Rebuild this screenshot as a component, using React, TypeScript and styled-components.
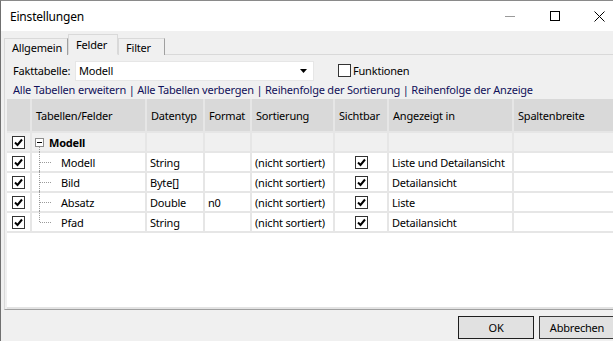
import React from 'react'
import styled, { createGlobalStyle } from 'styled-components'

const GlobalStyle = createGlobalStyle`
  html, body {
    margin: 0;
    padding: 0;
    overflow: hidden;
    background: #ffffff;
  }
  body {
    font-family: 'Noto Sans', 'Open Sans', sans-serif;
    font-size: 11px;
    letter-spacing: -0.2px;
    color: #000;
  }
`

type Field = {
  name: string
  type: string
  format: string
  shownIn: string
}

const fields: Field[] = [
  { name: 'Modell', type: 'String', format: '', shownIn: 'Liste und Detailansicht' },
  { name: 'Bild', type: 'Byte[]', format: '', shownIn: 'Detailansicht' },
  { name: 'Absatz', type: 'Double', format: 'n0', shownIn: 'Liste' },
  { name: 'Pfad', type: 'String', format: '', shownIn: 'Detailansicht' },
]

const columns = '23px 113px 56px 45px 81px 52px 123px 1fr'

const CheckBox: React.FC<{ checked?: boolean }> = ({ checked }) => (
  <StyledCheck>
    {checked && (
      <svg width="9" height="9" viewBox="0 0 9 9">
        <path d="M1 4.5 L3.5 7 L8 1.5" fill="none" stroke="#000" strokeWidth="2" />
      </svg>
    )}
  </StyledCheck>
)

const App: React.FC = () => {
  return (
    <>
      <GlobalStyle />
      <StyledWindow>
        <StyledTitleBar>
          <StyledTitle>Einstellungen</StyledTitle>
          <StyledCaption>
            <StyledCaptionButton>
              <svg width="10" height="10" viewBox="0 0 10 10">
                <path d="M0 5.5 H10" stroke="#9a9a9a" strokeWidth="1" />
              </svg>
            </StyledCaptionButton>
            <StyledCaptionButton>
              <svg width="10" height="10" viewBox="0 0 10 10">
                <rect x="0.5" y="0.5" width="9" height="9" fill="none" stroke="#000" strokeWidth="1" />
              </svg>
            </StyledCaptionButton>
            <StyledCaptionButton>
              <svg width="11" height="11" viewBox="0 0 11 11">
                <path d="M0.5 0.5 L10.5 10.5 M10.5 0.5 L0.5 10.5" stroke="#000" strokeWidth="1" />
              </svg>
            </StyledCaptionButton>
          </StyledCaption>
        </StyledTitleBar>

        <StyledBody>
          <StyledTabs>
            <StyledTab width={64}>Allgemein</StyledTab>
            <StyledTab width={50} active>Felder</StyledTab>
            <StyledTab width={47}>Filter</StyledTab>
          </StyledTabs>

          <StyledPanel>
            <StyledFormRow>
              <StyledLabel>Fakttabelle:</StyledLabel>
              <StyledCombo>
                <span>Modell</span>
                <svg width="7" height="4" viewBox="0 0 7 4">
                  <path d="M0 0 H7 L3.5 4 Z" fill="#000" />
                </svg>
              </StyledCombo>
              <StyledCheckLabel>
                <StyledPlainBox />
                Funktionen
              </StyledCheckLabel>
            </StyledFormRow>

            <StyledLinks>
              Alle Tabellen erweitern | Alle Tabellen verbergen | Reihenfolge der Sortierung | Reihenfolge der Anzeige
            </StyledLinks>

            <StyledGrid>
              <StyledRow>
                <StyledHeadCell />
                <StyledHeadCell>Tabellen/Felder</StyledHeadCell>
                <StyledHeadCell>Datentyp</StyledHeadCell>
                <StyledHeadCell>Format</StyledHeadCell>
                <StyledHeadCell>Sortierung</StyledHeadCell>
                <StyledHeadCell>Sichtbar</StyledHeadCell>
                <StyledHeadCell>Angezeigt in</StyledHeadCell>
                <StyledHeadCell>Spaltenbreite</StyledHeadCell>
              </StyledRow>

              <StyledRow>
                <StyledCell group center>
                  <CheckBox checked />
                </StyledCell>
                <StyledCell group>
                  <StyledTreeToggle>
                    <svg width="9" height="9" viewBox="0 0 9 9">
                      <rect x="0.5" y="0.5" width="8" height="8" fill="#fff" stroke="#8c8c8c" />
                      <path d="M2 4.5 H7" stroke="#000" />
                    </svg>
                  </StyledTreeToggle>
                  <StyledGroupName>Modell</StyledGroupName>
                  <StyledTrunk />
                </StyledCell>
                <StyledCell group />
                <StyledCell group />
                <StyledCell group />
                <StyledCell group />
                <StyledCell group />
                <StyledCell group />
              </StyledRow>

              {fields.map((f, i) => (
                <StyledRow key={f.name}>
                  <StyledCell center>
                    <CheckBox checked />
                  </StyledCell>
                  <StyledCell>
                    <StyledTrunkPart last={i === fields.length - 1} />
                    <StyledBranch />
                    <StyledFieldName>{f.name}</StyledFieldName>
                  </StyledCell>
                  <StyledCell>{f.type}</StyledCell>
                  <StyledCell>{f.format}</StyledCell>
                  <StyledCell>(nicht sortiert)</StyledCell>
                  <StyledCell center>
                    <CheckBox checked />
                  </StyledCell>
                  <StyledCell>{f.shownIn}</StyledCell>
                  <StyledCell />
                </StyledRow>
              ))}
            </StyledGrid>
          </StyledPanel>

          <StyledFooter>
            <StyledButton primary>OK</StyledButton>
            <StyledButton>Abbrechen</StyledButton>
          </StyledFooter>
        </StyledBody>
      </StyledWindow>
    </>
  )
}

const StyledWindow = styled.div`
  width: 622px;
  height: 341px;
  box-sizing: border-box;
  border-left: 1px solid #707070;
  border-top: 1px solid #8a8a8a;
  display: flex;
  flex-direction: column;
  background: #f0f0f0;
`

const StyledTitleBar = styled.div`
  height: 30px;
  background: #fff;
  display: flex;
  align-items: center;
  padding-left: 9px;
  flex-shrink: 0;
`

const StyledTitle = styled.div`
  flex: 1;
  font-size: 12px;
  padding-top: 1px;
`

const StyledCaption = styled.div`
  display: flex;
  height: 100%;
`

const StyledCaptionButton = styled.div`
  width: 45px;
  height: 100%;
  display: flex;
  align-items: center;
  justify-content: center;
`

const StyledBody = styled.div`
  flex: 1;
  display: flex;
  flex-direction: column;
  padding: 3px 0 0 3px;
`

const StyledTabs = styled.div`
  display: flex;
  align-items: flex-end;
  height: 21px;
  position: relative;
  z-index: 1;
  margin-bottom: -1px;
`

const StyledTab = styled.div<{ active?: boolean; width: number }>`
  box-sizing: border-box;
  width: ${p => p.width}px;
  height: ${p => (p.active ? '21px' : '17px')};
  padding: ${p => (p.active ? '2px 0 0 7px' : '0 0 0 7px')};
  border: 1px solid #d9d9d9;
  border-bottom: ${p => (p.active ? '1px solid #f0f0f0' : '0')};
  border-right-color: ${p => (p.active ? '#d9d9d9' : '#a0a0a0')};
  background: #f0f0f0;
  display: flex;
  align-items: ${p => (p.active ? 'flex-start' : 'center')};
  position: relative;
  z-index: ${p => (p.active ? 2 : 1)};
`

const StyledPanel = styled.div`
  height: 256px;
  border: 1px solid #d9d9d9;
  border-right: 0;
  border-bottom-color: #a0a0a0;
  padding: 6px 0 0 2px;
  display: flex;
  flex-direction: column;
  box-sizing: border-box;
`

const StyledFormRow = styled.div`
  display: flex;
  align-items: center;
  height: 19px;
  padding-left: 6px;
`

const StyledLabel = styled.div`
  width: 62px;
`

const StyledCombo = styled.div`
  width: 239px;
  height: 20px;
  box-sizing: border-box;
  background: #fff;
  border: 1px solid #e6e6e6;
  display: flex;
  align-items: center;
  justify-content: space-between;
  padding: 0 6px 0 3px;
`

const StyledCheckLabel = styled.div`
  display: flex;
  align-items: center;
  gap: 2px;
  margin-left: 24px;
`

const StyledPlainBox = styled.div`
  width: 11px;
  height: 11px;
  border: 1px solid #333;
  background: #fff;
`

const StyledLinks = styled.div`
  box-sizing: border-box;
  height: 19px;
  padding: 2px 0 0 6px;
  color: #10105a;
  white-space: nowrap;
`

const StyledGrid = styled.div`
  flex: 1;
  background: #fff;
  border-bottom: 2px solid #e3e3e3;
  display: flex;
  flex-direction: column;
`

const StyledRow = styled.div`
  display: grid;
  grid-template-columns: ${columns};
  column-gap: 2px;
  background: #e6e6e6;
  padding-bottom: 2px;
`

const StyledHeadCell = styled.div`
  height: 32px;
  background: #d9d9d9;
  display: flex;
  align-items: center;
  padding-left: 4px;
  white-space: nowrap;
  overflow: hidden;
`

const StyledCell = styled.div<{ group?: boolean; center?: boolean }>`
  height: 18px;
  background: ${p => (p.group ? '#f0f0f0' : '#fff')};
  display: flex;
  align-items: center;
  justify-content: ${p => (p.center ? 'center' : 'flex-start')};
  padding-left: ${p => (p.center ? '0' : '3px')};
  white-space: nowrap;
  position: relative;
`

const StyledCheck = styled.div`
  width: 11px;
  height: 11px;
  border: 1px solid #333;
  background: #fff;
  display: flex;
  align-items: center;
  justify-content: center;
`

const StyledTreeToggle = styled.div`
  display: flex;
`

const StyledGroupName = styled.div`
  font-weight: bold;
  margin-left: 5px;
`

const StyledTrunk = styled.div`
  position: absolute;
  left: 7px;
  top: 14px;
  height: 5px;
  border-left: 1px dotted #9a9a9a;
`

const StyledTrunkPart = styled.div<{ last?: boolean }>`
  position: absolute;
  left: 7px;
  top: -2px;
  height: ${p => (p.last ? '11px' : '20px')};
  border-left: 1px dotted #9a9a9a;
`

const StyledBranch = styled.div`
  width: 11px;
  margin-left: 5px;
  border-top: 1px dotted #9a9a9a;
`

const StyledFieldName = styled.div`
  margin-left: 10px;
`

const StyledFooter = styled.div`
  flex: 1;
  display: flex;
  justify-content: flex-end;
  align-items: flex-start;
  gap: 5px;
  padding: 6px 7px 0 0;
`

const StyledButton = styled.div<{ primary?: boolean }>`
  box-sizing: border-box;
  width: 76px;
  height: 23px;
  background: #e1e1e1;
  border: 1px solid ${p => (p.primary ? '#1e1e1e' : '#3a3a3a')};
  display: flex;
  align-items: center;
  justify-content: center;
`

export default App
